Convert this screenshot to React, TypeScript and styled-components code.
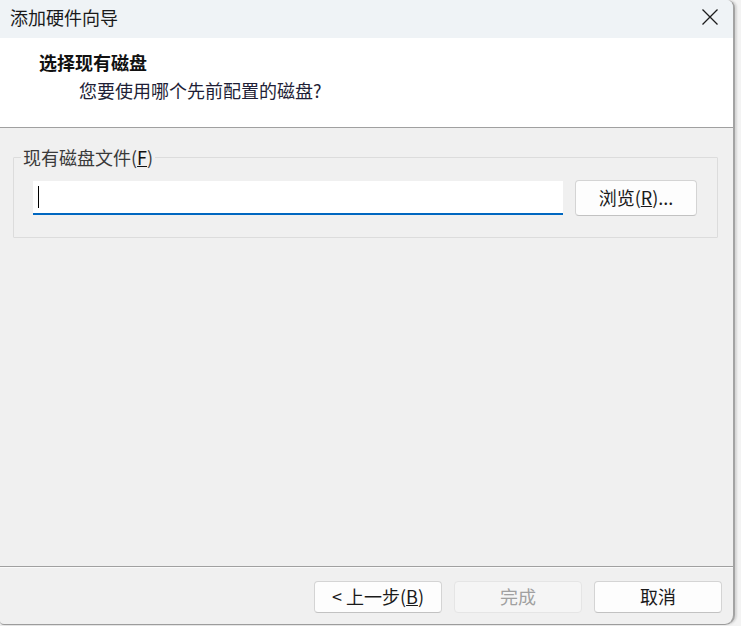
import styled, { createGlobalStyle } from 'styled-components'

const GlobalStyle = createGlobalStyle`
  html, body {
    margin: 0;
    padding: 0;
    background: #ececec;
  }
  body {
    font-family: 'Noto Sans CJK SC', 'Noto Sans', sans-serif;
  }
`

const App = () => {
  return (
    <PAGE>
      <GlobalStyle />
      <DIALOG>
        <TITLE_BAR>
          <WINDOW_TITLE>添加硬件向导</WINDOW_TITLE>
          <CLOSE_BUTTON aria-label='关闭'>
            <svg width='16' height='16' viewBox='0 0 16 16'>
              <path d='M0.5 0.5 L15.5 15.5 M15.5 0.5 L0.5 15.5' stroke='#1c1c1c' strokeWidth='1.3' fill='none' />
            </svg>
          </CLOSE_BUTTON>
        </TITLE_BAR>

        <HEADER>
          <HEADING>选择现有磁盘</HEADING>
          <SUBHEADING>您要使用哪个先前配置的磁盘?</SUBHEADING>
        </HEADER>

        <BODY>
          <GROUP>
            <LEGEND>
              现有磁盘文件(<u>F</u>)
            </LEGEND>
            <FILE_ROW>
              <TEXT_BOX>
                <CARET />
              </TEXT_BOX>
              <BUTTON $width={122}>
                浏览(<u>R</u>)...
              </BUTTON>
            </FILE_ROW>
          </GROUP>
        </BODY>

        <FOOTER>
          <BUTTON>
            &lt;&nbsp;上一步(<u>B</u>)
          </BUTTON>
          <BUTTON disabled>完成</BUTTON>
          <BUTTON>取消</BUTTON>
        </FOOTER>
      </DIALOG>
    </PAGE>
  )
}

export default App

const PAGE = styled.div`
  width: 741px;
  height: 626px;
  overflow: hidden;
  background: linear-gradient(to right, #ececec, #f3f3f3);
`

const DIALOG = styled.div`
  width: 735px;
  height: 625px;
  box-sizing: border-box;
  display: flex;
  flex-direction: column;
  background: #f0f0f0;
  border-right: 2px solid #a3a3a3;
  border-bottom: 1px solid #9c9c9c;
  border-radius: 0 8px 10px 4px;
  overflow: hidden;
  box-shadow: 2px 0 2px rgba(0, 0, 0, 0.12);
`

const TITLE_BAR = styled.div`
  height: 38px;
  flex: none;
  display: flex;
  align-items: center;
  justify-content: space-between;
  background: #eff3f6;
`

const WINDOW_TITLE = styled.div`
  padding-left: 10px;
  font-size: 18px;
  color: #1a1a1a;
  line-height: 1;
  margin-top: -4px;
`

const CLOSE_BUTTON = styled.button`
  width: 46px;
  height: 38px;
  border: none;
  background: transparent;
  display: grid;
  place-items: center;
  padding: 0;
  margin-top: -5px;
`

const HEADER = styled.div`
  height: 89px;
  flex: none;
  background: #ffffff;
  border-bottom: 1px solid #a0a0a0;
  display: flex;
  flex-direction: column;
  box-sizing: content-box;
`

const HEADING = styled.div`
  padding: 11px 0 0 39px;
  font-size: 18px;
  font-weight: 700;
  color: #111111;
  line-height: 26px;
`

const SUBHEADING = styled.div`
  padding: 2px 0 0 79px;
  font-size: 18px;
  color: #1e1e36;
  line-height: 26px;
`

const BODY = styled.div`
  flex: 1;
  padding: 17px 15px 0 13px;
  border-bottom: 1px solid #a0a0a0;
  box-shadow: 0 1px 0 #fafafa;
`

const GROUP = styled.fieldset`
  margin: 0;
  min-width: 0;
  padding: 11px 20px 21px 19px;
  border: 1px solid #dcdcdc;
  border-radius: 1px;
`

const LEGEND = styled.legend`
  margin-left: -12px;
  padding: 0 2px;
  font-size: 18px;
  line-height: 24px;
  color: #3a3a3a;

  u {
    color: #111;
  }
`

const FILE_ROW = styled.div`
  display: flex;
  align-items: center;
  gap: 12px;
`

const TEXT_BOX = styled.div`
  flex: 1;
  height: 32px;
  background: #ffffff;
  border-bottom: 2px solid #0067c0;
  display: flex;
  align-items: center;
  padding-left: 5px;
`

const CARET = styled.span`
  width: 1px;
  height: 22px;
  background: #000000;
`

const FOOTER = styled.div`
  height: 57px;
  flex: none;
  display: flex;
  justify-content: flex-end;
  align-items: flex-start;
  gap: 12px;
  padding: 14px 11px 0 0;
  box-sizing: border-box;
`

const BUTTON = styled.button<{ $width?: number }>`
  width: ${(props) => props.$width ?? 128}px;
  height: 32px;
  box-sizing: border-box;
  border: 1px solid #d4d4d4;
  border-bottom-color: #c2c2c2;
  border-radius: 4px;
  background: #fdfdfd;
  font-family: 'Noto Sans CJK SC', 'Noto Sans', sans-serif;
  font-size: 18px;
  line-height: 1;
  color: #1a1a1a;
  padding: 0 0 3px;

  ${FILE_ROW} & {
    height: 36px;
  }

  &:disabled {
    background: #f5f5f5;
    border-color: #e5e5e5;
    color: #a0a0a0;
  }
`
